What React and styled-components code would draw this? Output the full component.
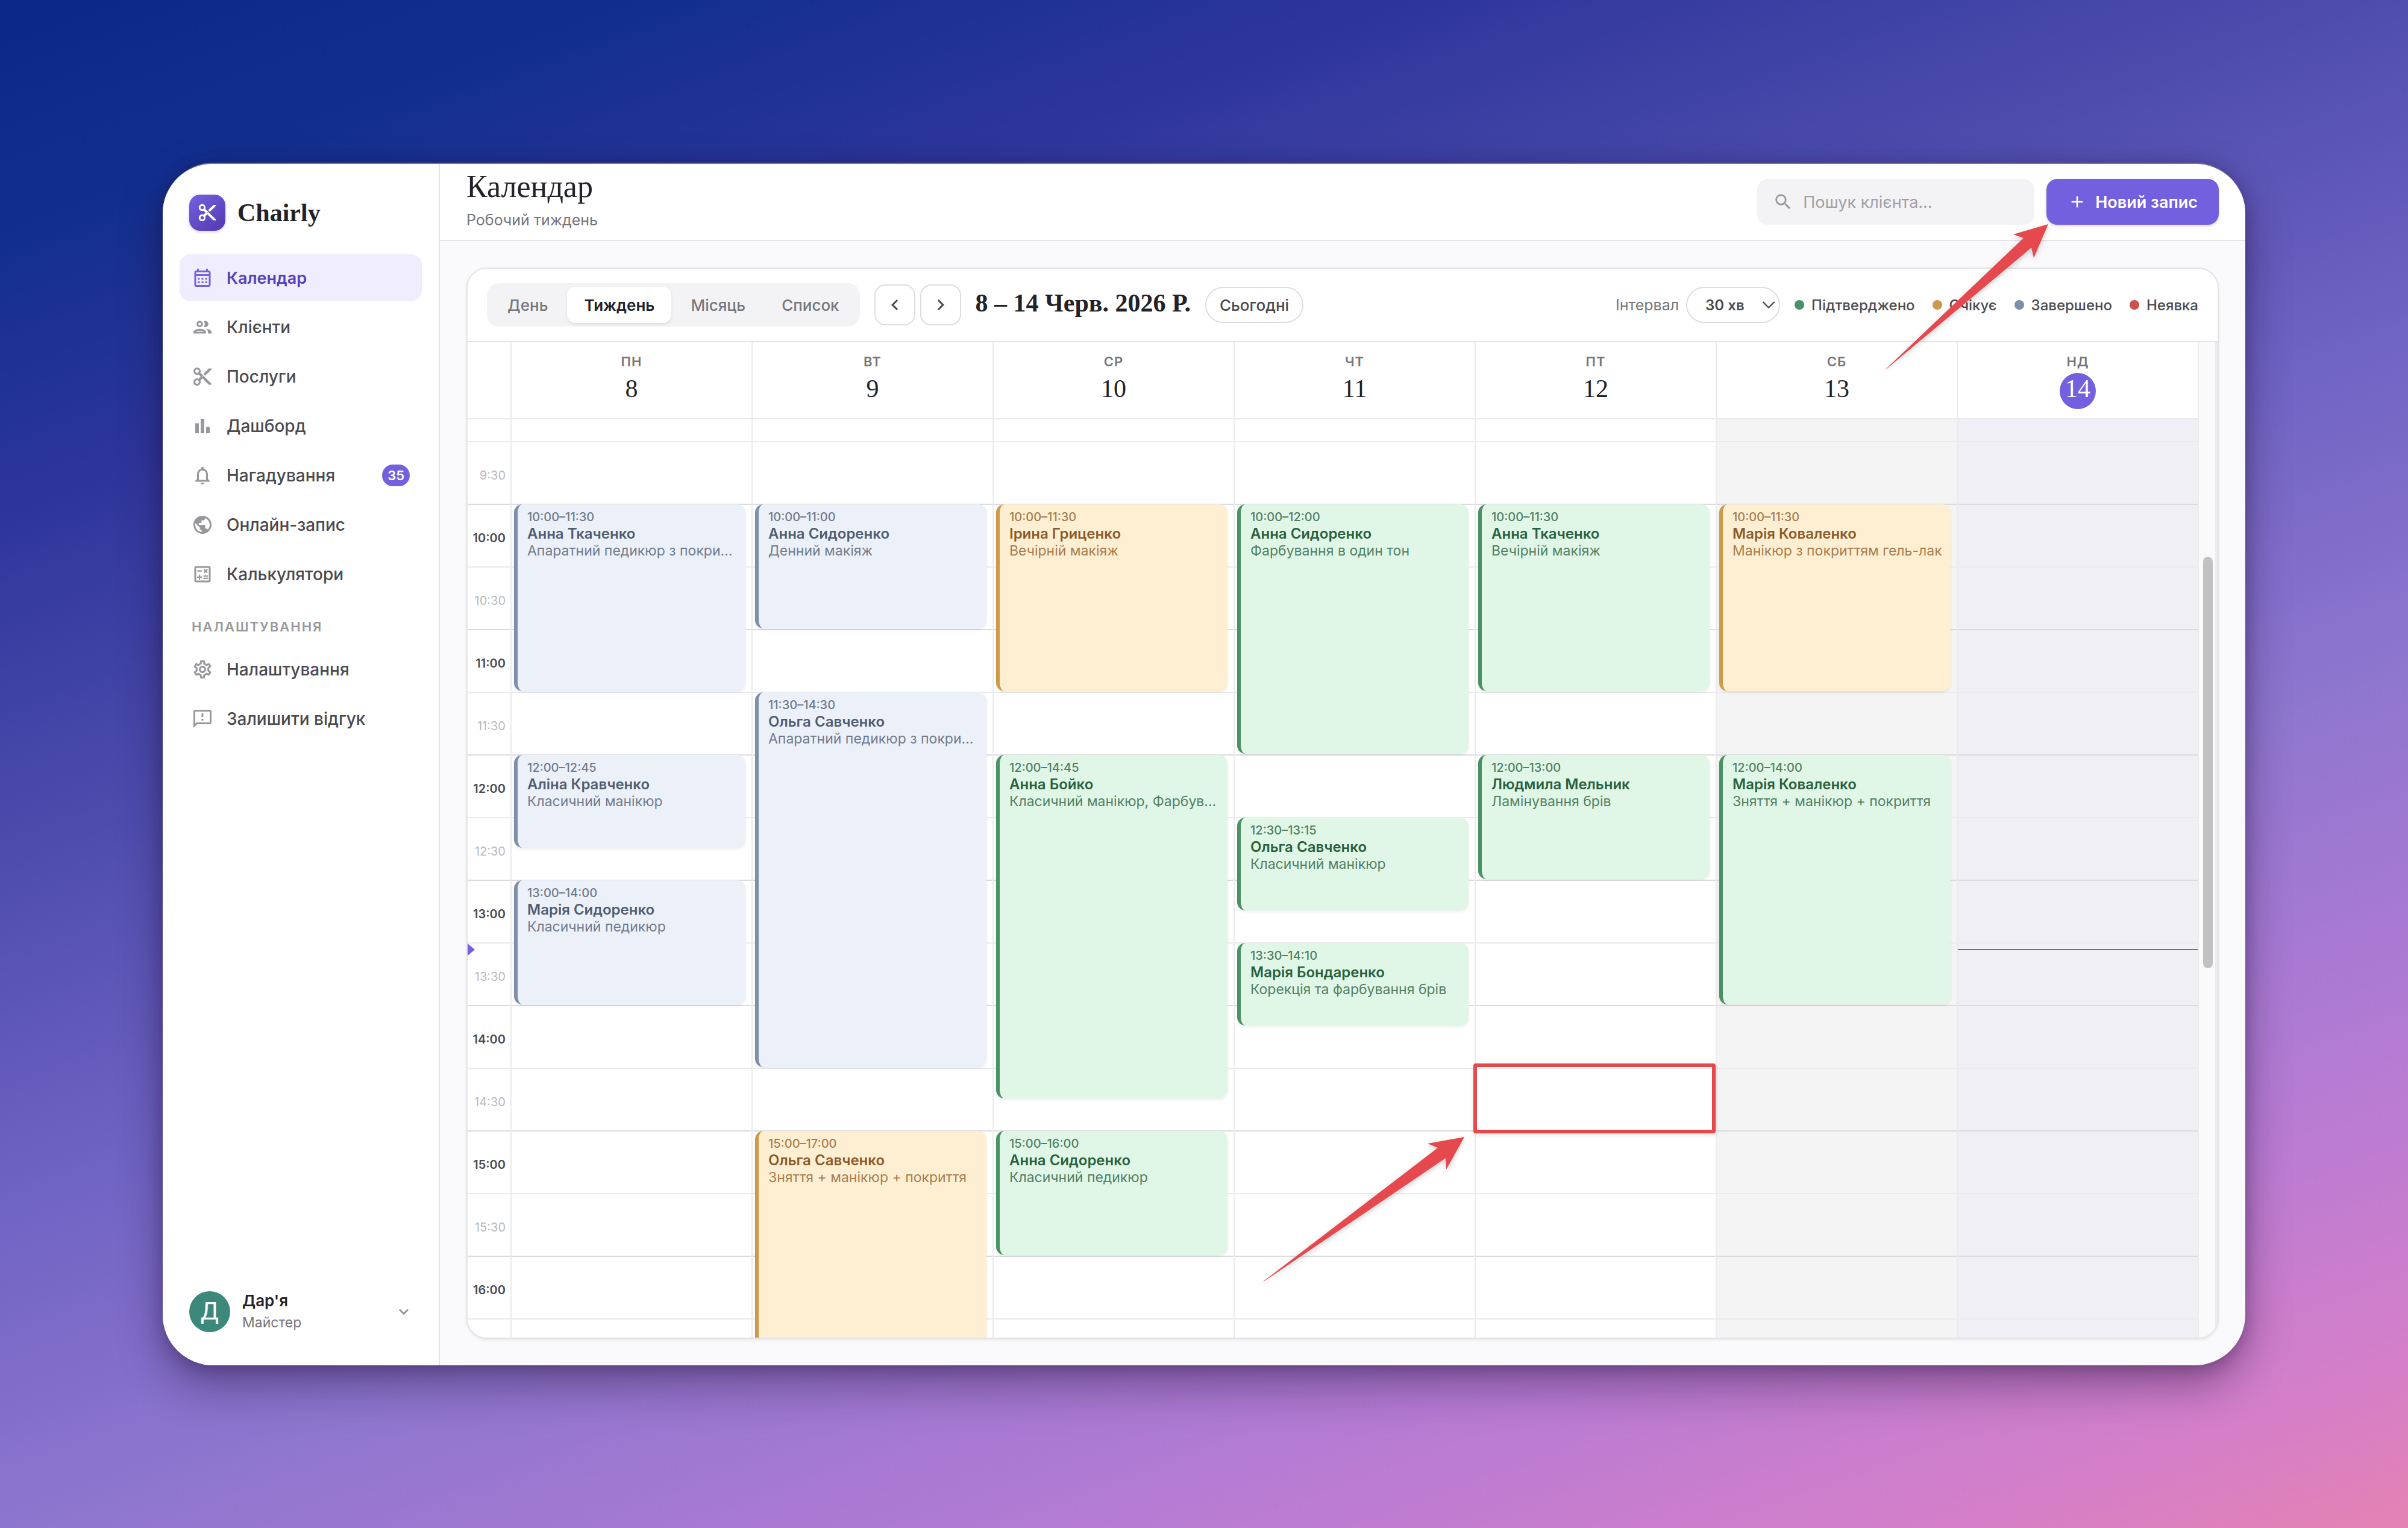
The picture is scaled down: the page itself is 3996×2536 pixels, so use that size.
import React from 'react';
import styled, { createGlobalStyle, css } from 'styled-components';
import {
    MdAdd,
    MdBarChart,
    MdChevronLeft,
    MdChevronRight,
    MdContentCut,
    MdExpandMore,
    MdNotificationsNone,
    MdOutlineCalculate,
    MdOutlineCalendarMonth,
    MdOutlineFeedback,
    MdOutlineSettings,
    MdPublic,
    MdSearch
} from 'react-icons/md';
import { ChevronDown } from 'lucide-react';

const SANS = 'Inter, "Noto Sans", sans-serif';
const SERIF = '"Liberation Serif", "Noto Serif", serif';

const SLOT = 104;
const FIRST_SLOT = 38;
const FIRST_TIME = 9 * 60 + 30;

const GlobalStyle = createGlobalStyle`
  * {
    box-sizing: border-box;
  }

  body {
    margin: 0;
    font-family: ${SANS};
    color: #222228;
  }

  button, input, select {
    font: inherit;
    color: inherit;
  }

  button {
    padding: 0;
    border: 0;
    background: none;
    cursor: pointer;
  }
`;

const Page = styled.div`
  height: 100vh;
  padding: 270px;
  display: flex;
  background-image: linear-gradient(
    160deg,
    #0a2987 0%,
    #122f8e 10%,
    #2d359a 21%,
    #4e4dae 36%,
    #6f63c3 50%,
    #8e76cf 64%,
    #b57bd4 80%,
    #d57fc9 93%,
    #e482b2 100%
  );
`;

const Window = styled.div`
  position: relative;
  flex: 1;
  min-width: 0;
  display: flex;
  overflow: hidden;
  border-top: 2px solid #75797f;
  border-radius: 84px;
  background: #fafafc;
  box-shadow: 0 32px 72px rgba(30, 12, 50, 0.42), 0 4px 24px rgba(30, 12, 50, 0.25);
`;

const Sidebar = styled.aside`
  flex: 0 0 460px;
  display: flex;
  flex-direction: column;
  padding: 51px 28px 53px;
  border-right: 2px solid #e4e4e8;
  background: #fff;
`;

const Brand = styled.div`
  display: flex;
  align-items: center;
  gap: 20px;
  padding: 0 16px 39px;
  font-family: ${SERIF};
  font-size: 42px;
  font-weight: 700;
  line-height: 60px;
`;

const BrandMark = styled.span`
  width: 60px;
  height: 60px;
  display: flex;
  align-items: center;
  justify-content: center;
  border-radius: 18px;
  background: linear-gradient(145deg, #7562df, #5238b0);
  box-shadow: 0 2px 4px rgba(82, 56, 176, 0.25);
  color: #fff;
  font-size: 34px;
`;

const Nav = styled.nav`
  flex: 1;
  display: flex;
  flex-direction: column;
  gap: 4px;
`;

const NavLink = styled.a`
  height: 78px;
  display: flex;
  align-items: center;
  gap: 22px;
  padding: 0 20px;
  border-radius: 18px;
  background: ${props => props.$active ? '#efedfe' : 'transparent'};
  color: ${props => props.$active ? '#5640b8' : '#4a4a50'};
  font-size: ${props => props.$active ? 27 : 28}px;
  font-weight: ${props => props.$active ? 600 : 500};
  text-decoration: none;

  svg {
    flex: none;
    font-size: 36px;
    color: ${props => props.$active ? '#7562df' : '#97979c'};
  }
`;

const Badge = styled.span`
  height: 36px;
  margin-left: auto;
  padding: 0 9px;
  border-radius: 18px;
  background: #7360de;
  color: #fff;
  font-size: 22px;
  font-weight: 600;
  line-height: 36px;
`;

const NavTitle = styled.h2`
  margin: 0;
  padding: 30px 20px 14px;
  color: #98989d;
  font-size: 22px;
  font-weight: 600;
  line-height: 28px;
  letter-spacing: 2px;
  text-transform: uppercase;
`;

const UserMenu = styled.button`
  display: flex;
  align-items: center;
  padding: 0 14px 0 16px;
  gap: 20px;
  text-align: left;

  svg {
    margin-left: auto;
    font-size: 32px;
    color: #8e8e93;
  }
`;

const Avatar = styled.span`
  width: 68px;
  height: 68px;
  border-radius: 50%;
  background: #3c887b;
  color: #fff;
  font-family: Roboto, sans-serif;
  font-size: 40px;
  line-height: 68px;
  text-align: center;
`;

const UserName = styled.strong`
  display: block;
  font-size: 26px;
  font-weight: 600;
  line-height: 36px;
`;

const UserRole = styled.span`
  display: block;
  color: #75757b;
  font-size: 23px;
  line-height: 36px;
`;

const Content = styled.div`
  flex: 1;
  min-width: 0;
  display: flex;
  flex-direction: column;
`;

const Header = styled.header`
  flex: 0 0 128px;
  display: flex;
  align-items: center;
  gap: 20px;
  padding: 0 44px;
  border-bottom: 2px solid #e4e4e8;
  background: #fff;
`;

const Heading = styled.div`
  flex: 1;
`;

const Title = styled.h1`
  margin: 0;
  font-family: ${SERIF};
  font-size: 52px;
  font-weight: 400;
  line-height: 60px;
`;

const Subtitle = styled.p`
  margin: 0;
  color: #75757b;
  font-size: 25px;
  line-height: 50px;
`;

const Search = styled.label`
  width: 460px;
  height: 76px;
  display: flex;
  align-items: center;
  gap: 16px;
  padding: 0 26px;
  border-radius: 18px;
  background: #f3f3f5;

  svg {
    flex: none;
    font-size: 34px;
    color: #97979c;
  }

  input {
    width: 100%;
    padding: 0;
    border: 0;
    outline: 0;
    background: none;
    font-size: 27px;
  }

  input::placeholder {
    color: #a0a0a5;
    opacity: 1;
  }
`;

const PrimaryButton = styled.button`
  height: 76px;
  display: flex;
  align-items: center;
  gap: 14px;
  padding: 0 35px;
  border-radius: 18px;
  background: #7360de;
  box-shadow: 0 2px 4px rgba(50, 30, 120, 0.2);
  color: #fff;
  font-size: 27px;
  font-weight: 600;

  svg {
    font-size: 32px;
  }
`;

const Main = styled.main`
  flex: 1;
  min-height: 0;
  display: flex;
  padding: 44px;
`;

const Card = styled.section`
  flex: 1;
  min-width: 0;
  display: flex;
  flex-direction: column;
  overflow: hidden;
  border: 2px solid #e4e4e7;
  border-radius: 34px;
  background: #fff;
  box-shadow: 0 2px 4px rgba(0, 0, 0, 0.08);
`;

const Toolbar = styled.div`
  flex: 0 0 122px;
  display: flex;
  align-items: center;
  gap: 24px;
  padding: 0 32px;
  border-bottom: 2px solid #e4e4e7;
`;

const Segments = styled.div`
  display: flex;
  gap: 4px;
  padding: 6px;
  border-radius: 20px;
  background: #f3f3f5;
`;

const Segment = styled.button`
  height: 60px;
  padding: 0 28px;
  border-radius: 14px;
  color: #77777c;
  font-size: 26px;
  font-weight: ${props => props.$active ? 600 : 500};

  ${props => props.$active && css`
    background: #fff;
    box-shadow: 0 2px 4px rgba(0, 0, 0, 0.1);
    color: #222228;
  `}
`;

const Arrows = styled.div`
  display: flex;
  gap: 8px;
`;

const ArrowButton = styled.button`
  width: 68px;
  height: 68px;
  display: flex;
  align-items: center;
  justify-content: center;
  border: 2px solid #dededf;
  border-radius: 18px;
  color: #4a4a50;
  font-size: 36px;
`;

const Period = styled.h2`
  margin: 0;
  padding-bottom: 6px;
  font-family: ${SERIF};
  font-size: 42px;
  font-weight: 700;
  line-height: 48px;
  white-space: nowrap;
`;

const TodayButton = styled.button`
  height: 60px;
  padding: 0 22px;
  border: 2px solid #dededf;
  border-radius: 30px;
  color: #4a4a50;
  font-size: 26px;
  font-weight: 500;
`;

const Interval = styled.label`
  display: flex;
  align-items: center;
  gap: 12px;
  margin-left: auto;
  color: #75757b;
  font-size: 25px;
`;

const SelectBox = styled.span`
  display: grid;
  align-items: center;
  color: #4a4a50;

  select,
  svg {
    grid-area: 1 / 1;
  }

  select {
    width: 156px;
    height: 60px;
    padding: 0 30px;
    appearance: none;
    border: 2px solid #dededf;
    border-radius: 30px;
    background: #fff;
    font-size: 24px;
    font-weight: 600;
  }

  svg {
    justify-self: end;
    width: 36px;
    height: 36px;
    margin-right: 1px;
    pointer-events: none;
  }
`;

const Legend = styled.ul`
  display: flex;
  gap: 29px;
  margin: 0;
  padding: 0;
  list-style: none;
  color: #4a4a50;
  font-size: 24px;
  font-weight: 500;
  white-space: nowrap;
`;

const LegendItem = styled.li`
  display: flex;
  align-items: center;
  gap: 12px;

  &::before {
    content: '';
    width: 16px;
    height: 16px;
    border-radius: 50%;
    background: ${props => props.$color};
  }
`;

const Board = styled.div`
  flex: 1;
  min-height: 0;
  display: flex;
`;

const Week = styled.div`
  flex: 1;
  min-width: 0;
  display: grid;
  grid-template-columns: 73px repeat(7, minmax(0, 1fr));
  grid-template-rows: 128px minmax(0, 1fr);
  overflow: hidden;
`;

const DayHead = styled.div`
  padding-top: 18px;
  border-right: 2px solid #ebebed;
  border-bottom: 2px solid #ebebed;
  text-align: center;
`;

const DayName = styled.div`
  color: #75757b;
  font-size: 22px;
  font-weight: 600;
  line-height: 28px;
  letter-spacing: 1px;
`;

const DayNumber = styled.div`
  width: 60px;
  height: 60px;
  margin: 5px auto 0;
  border-radius: 50%;
  background: ${props => props.$today ? '#7360de' : 'transparent'};
  color: ${props => props.$today ? '#fff' : '#222228'};
  font-family: ${SERIF};
  font-size: 42px;
  line-height: 52px;
`;

const Column = styled.div`
  position: relative;
  border-right: 2px solid #ebebed;
  background: ${props => props.$tint || '#fff'};
`;

const Slot = styled.div`
  height: ${props => props.$first ? FIRST_SLOT : SLOT}px;
  padding: 6px 8px 0 0;
  border-bottom: 2px solid ${props => props.$hourEnd ? '#dcdcdf' : '#ebebed'};
  color: ${props => props.$half ? '#b9b9bc' : '#4a4a50'};
  font-size: 20px;
  font-weight: ${props => props.$half ? 400 : 600};
  line-height: 98px;
  text-align: right;
`;

const palettes = {
  done: { bar: '#7f8faa', fill: '#ecf0f9', name: '#4f5d70', text: '#707b8c' },
  pending: { bar: '#cd9a4b', fill: '#feefd3', name: '#8c5a28', text: '#a97c4d' },
  confirmed: { bar: '#4a9163', fill: '#e0f7e7', name: '#28603d', text: '#517f63' },
};

const Event = styled.button`
  position: absolute;
  left: 4px;
  right: 10px;
  display: flex;
  flex-direction: column;
  justify-content: flex-start;
  padding: 7px 10px 0 16px;
  border-left: 6px solid ${props => palettes[props.$kind].bar};
  border-radius: 14px;
  background: ${props => palettes[props.$kind].fill};
  box-shadow: 0 2px 4px rgba(0, 0, 0, 0.08);
  color: ${props => palettes[props.$kind].text};
  font-size: 23px;
  line-height: 28px;
  text-align: left;

  span,
  strong {
    display: block;
    white-space: nowrap;
  }

  strong {
    color: ${props => palettes[props.$kind].name};
    font-size: 24px;
    font-weight: 600;
  }
`;

const EventTime = styled.span`
  font-size: 20px;
  font-weight: 500;
`;

const NowLine = styled.div`
  position: absolute;
  left: 0;
  right: 0;
  height: 2px;
  background: #7360de;
`;

const NowMarker = styled.div`
  position: absolute;
  left: 0;
  border: solid transparent;
  border-width: 10px 0 10px 12px;
  border-left-color: #7360de;
  transform: translateY(-50%);
`;

const ScrollTrack = styled.div`
  flex: 0 0 31px;
  display: grid;
  grid-template-rows: 356fr 683fr 613fr;
  justify-items: center;
  padding-left: 3px;
  border-right: 4px solid #ececee;
  background: #fafafa;
`;

const ScrollThumb = styled.div`
  grid-row: 2;
  width: 16px;
  border-radius: 8px;
  background: #c1c1c1;
`;

const Highlight = styled.div`
  position: absolute;
  left: -4px;
  right: 0;
  height: 116px;
  z-index: 2;
  border: 6px solid #e5484d;
  border-radius: 4px;
  box-shadow: 0 2px 6px rgba(0, 0, 0, 0.15);
`;

const pointer = css`
  position: absolute;
  z-index: 3;
  fill: #e5484d;
  overflow: visible;
  filter: drop-shadow(0 3px 4px rgba(0, 0, 0, 0.2));
  pointer-events: none;
`;

const ButtonPointer = styled.svg`
  ${pointer}
  top: 100px;
  right: 327px;
`;

const SlotPointer = styled.svg`
  ${pointer}
  right: calc(100% + 19px);
`;

const GroupIcon = () => (
  <svg width="1em" height="1em" viewBox="0 0 24 24" fill="currentColor">
    <path d="M9 13.75c-2.34 0-7 1.17-7 3.5V19h14v-1.75c0-2.33-4.66-3.5-7-3.5zM4.34 17c.84-.58 2.87-1.25 4.66-1.25s3.82.67 4.66 1.25H4.34zM9 12c1.93 0 3.5-1.57 3.5-3.5S10.93 5 9 5 5.5 6.57 5.5 8.5 7.07 12 9 12zm0-5c.83 0 1.5.67 1.5 1.5S9.83 10 9 10s-1.5-.67-1.5-1.5S8.17 7 9 7zm7.04 6.81c1.16.84 1.96 1.96 1.96 3.44V19h4v-1.75c0-2.02-3.5-3.17-5.96-3.44zM15 12c1.93 0 3.5-1.57 3.5-3.5S16.93 5 15 5c-.54 0-1.04.13-1.5.35.63.89 1 1.98 1 3.15s-.37 2.26-1 3.15c.46.22.96.35 1.5.35z"/>
  </svg>
);

const menu = [
  { icon: MdOutlineCalendarMonth, label: 'Календар', active: true },
  { icon: GroupIcon, label: 'Клієнти' },
  { icon: MdContentCut, label: 'Послуги' },
  { icon: MdBarChart, label: 'Дашборд' },
  { icon: MdNotificationsNone, label: 'Нагадування', count: 35 },
  { icon: MdPublic, label: 'Онлайн-запис' },
  { icon: MdOutlineCalculate, label: 'Калькулятори' },
];

const settingsMenu = [
  { icon: MdOutlineSettings, label: 'Налаштування' },
  { icon: MdOutlineFeedback, label: 'Залишити відгук' },
];

const views = ['День', 'Тиждень', 'Місяць', 'Список'];

const legend = [
  { label: 'Підтверджено', color: '#4a9163' },
  { label: 'Очікує', color: '#cd9a4b' },
  { label: 'Завершено', color: '#7f8faa' },
  { label: 'Неявка', color: '#c9544f' },
];

const days = [
  {
    name: 'ПН', number: 8, events: [
      ['done', '10:00', '11:30', 'Анна Ткаченко', 'Апаратний педикюр з покри…'],
      ['done', '12:00', '12:45', 'Аліна Кравченко', 'Класичний манікюр'],
      ['done', '13:00', '14:00', 'Марія Сидоренко', 'Класичний педикюр'],
    ]
  },
  {
    name: 'ВТ', number: 9, events: [
      ['done', '10:00', '11:00', 'Анна Сидоренко', 'Денний макіяж'],
      ['done', '11:30', '14:30', 'Ольга Савченко', 'Апаратний педикюр з покри…'],
      ['pending', '15:00', '17:00', 'Ольга Савченко', 'Зняття + манікюр + покриття'],
    ]
  },
  {
    name: 'СР', number: 10, events: [
      ['pending', '10:00', '11:30', 'Ірина Гриценко', 'Вечірній макіяж'],
      ['confirmed', '12:00', '14:45', 'Анна Бойко', 'Класичний манікюр, Фарбув…'],
      ['confirmed', '15:00', '16:00', 'Анна Сидоренко', 'Класичний педикюр'],
    ]
  },
  {
    name: 'ЧТ', number: 11, events: [
      ['confirmed', '10:00', '12:00', 'Анна Сидоренко', 'Фарбування в один тон'],
      ['confirmed', '12:30', '13:15', 'Ольга Савченко', 'Класичний манікюр'],
      ['confirmed', '13:30', '14:10', 'Марія Бондаренко', 'Корекція та фарбування брів'],
    ]
  },
  {
    name: 'ПТ', number: 12, marked: '14:30', events: [
      ['confirmed', '10:00', '11:30', 'Анна Ткаченко', 'Вечірній макіяж'],
      ['confirmed', '12:00', '13:00', 'Людмила Мельник', 'Ламінування брів'],
    ]
  },
  {
    name: 'СБ', number: 13, tint: '#f4f4f4', events: [
      ['pending', '10:00', '11:30', 'Марія Коваленко', 'Манікюр з покриттям гель-лак'],
      ['confirmed', '12:00', '14:00', 'Марія Коваленко', 'Зняття + манікюр + покриття'],
    ]
  },
  { name: 'НД', number: 14, tint: '#f0eff6', today: true, events: [] },
];

const slots = [
  '9:00', '9:30', '10:00', '10:30', '11:00', '11:30', '12:00', '12:30', '13:00',
  '13:30', '14:00', '14:30', '15:00', '15:30', '16:00'
];

const NOW = '13:33';

const minutes = (time) => {
  const [h, m] = time.split(':').map(Number);
  return h * 60 + m;
};

// distance of a time from the top of the visible part of a day
const offset = (time) => Math.round(FIRST_SLOT + (minutes(time) - FIRST_TIME) * SLOT / 30);

const renderSlots = (labelled) => slots.map((time, i) => {
  const half = time.endsWith(':30');
  return <Slot key={time} $first={i === 0} $half={half} $hourEnd={half}>
    {labelled && i > 0 ? time : null}
  </Slot>;
});

const MenuItem = ({ item }) => (
  <NavLink href="#" $active={item.active} aria-current={item.active ? 'page' : undefined}>
    <item.icon/>
    {item.label}
    {item.count ? <Badge>{item.count}</Badge> : null}
  </NavLink>
);

const Day = ({ day }) => (
  <Column $tint={day.tint}>
    {renderSlots(false)}
    {day.events.map(([kind, from, to, name, service]) => (
      <Event
        key={from}
        type="button"
        $kind={kind}
        style={{ top: offset(from) - 1, height: offset(to) - offset(from) - 2 }}
      >
        <EventTime>{from}–{to}</EventTime>
        <strong>{name}</strong>
        <span>{service}</span>
      </Event>
    ))}
    {day.today && <NowLine style={{ top: offset(NOW) - 1 }}/>}
    {day.marked && <>
      <Highlight style={{ top: offset(day.marked) - 9 }}/>
      <SlotPointer
        width="334"
        height="240"
        viewBox="0 0 334 240"
        style={{ top: offset(day.marked) + 113 }}
        aria-hidden="true"
      >
        <path d="M0 240 L290 18 L273 11 L334 0 L304 54 L303 35 L1 240 Z"/>
      </SlotPointer>
    </>}
  </Column>
);

const App = () => (
  <>
    <GlobalStyle/>
    <Page>
      <Window>
        <Sidebar>
          <Brand>
            <BrandMark><MdContentCut/></BrandMark>
            Chairly
          </Brand>
          <Nav>
            {menu.map(item => <MenuItem key={item.label} item={item}/>)}
            <NavTitle>Налаштування</NavTitle>
            {settingsMenu.map(item => <MenuItem key={item.label} item={item}/>)}
          </Nav>
          <UserMenu type="button">
            <Avatar>Д</Avatar>
            <span>
              <UserName>Дар'я</UserName>
              <UserRole>Майстер</UserRole>
            </span>
            <MdExpandMore/>
          </UserMenu>
        </Sidebar>

        <Content>
          <Header>
            <Heading>
              <Title>Календар</Title>
              <Subtitle>Робочий тиждень</Subtitle>
            </Heading>
            <Search>
              <MdSearch/>
              <input type="search" aria-label="Пошук клієнта" placeholder="Пошук клієнта…"/>
            </Search>
            <PrimaryButton type="button">
              <MdAdd/>
              Новий запис
            </PrimaryButton>
          </Header>

          <Main>
            <Card>
              <Toolbar>
                <Segments>
                  {views.map(view => (
                    <Segment key={view} type="button" $active={view === 'Тиждень'}>{view}</Segment>
                  ))}
                </Segments>
                <Arrows>
                  <ArrowButton type="button" aria-label="Попередній тиждень"><MdChevronLeft/></ArrowButton>
                  <ArrowButton type="button" aria-label="Наступний тиждень"><MdChevronRight/></ArrowButton>
                </Arrows>
                <Period>8 – 14 Черв. 2026 Р.</Period>
                <TodayButton type="button">Сьогодні</TodayButton>
                <Interval>
                  Інтервал
                  <SelectBox>
                    <select defaultValue="30">
                      <option value="30">30 хв</option>
                    </select>
                    <ChevronDown strokeWidth={1.5}/>
                  </SelectBox>
                </Interval>
                <Legend>
                  {legend.map(item => (
                    <LegendItem key={item.label} $color={item.color}>{item.label}</LegendItem>
                  ))}
                </Legend>
              </Toolbar>

              <Board>
                <Week>
                  <DayHead/>
                  {days.map(day => (
                    <DayHead key={day.name}>
                      <DayName>{day.name}</DayName>
                      <DayNumber $today={day.today}>{day.number}</DayNumber>
                    </DayHead>
                  ))}
                  <Column>
                    {renderSlots(true)}
                    <NowMarker style={{ top: offset(NOW) }}/>
                  </Column>
                  {days.map(day => <Day key={day.name} day={day}/>)}
                </Week>
                <ScrollTrack aria-hidden="true">
                  <ScrollThumb/>
                </ScrollTrack>
              </Board>
            </Card>
          </Main>
        </Content>

        <ButtonPointer width="269" height="240" viewBox="0 0 269 240" aria-hidden="true">
          <path d="M0 240 L228 23 L211 17 L269 0 L245 56 L241 39 L1 240 Z"/>
        </ButtonPointer>
      </Window>
    </Page>
  </>
);

export default App;
